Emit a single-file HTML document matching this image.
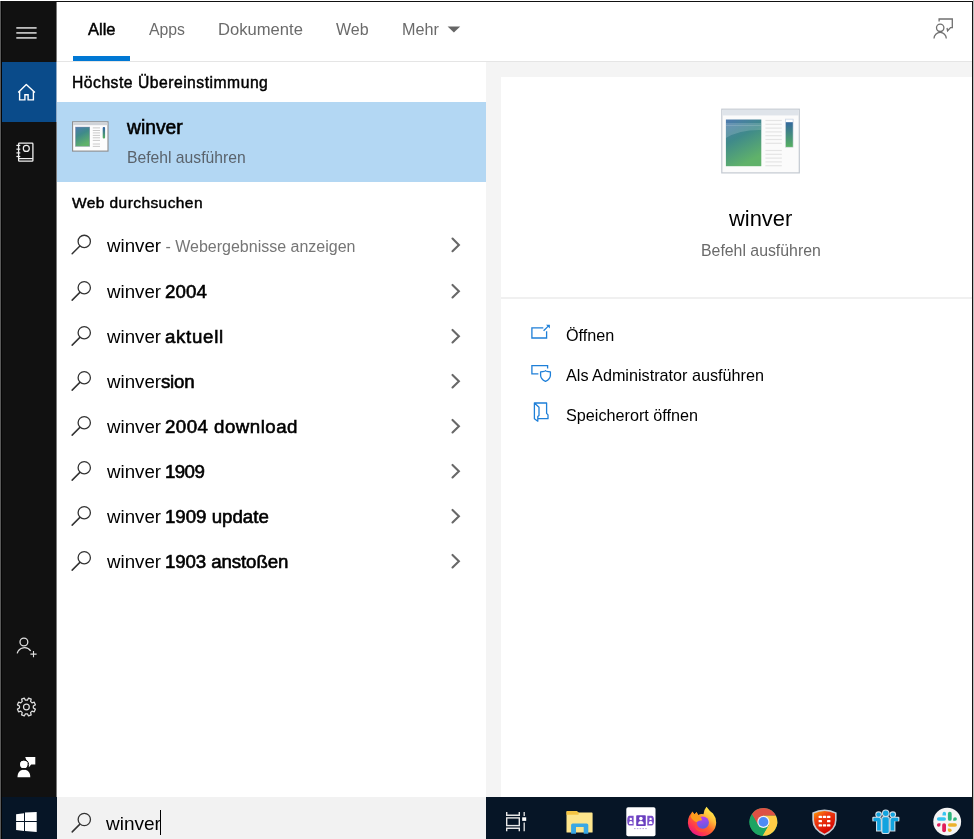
<!DOCTYPE html>
<html><head><meta charset="utf-8"><title>Suche</title><style>
*{margin:0;padding:0;box-sizing:border-box}
html,body{width:974px;height:839px;overflow:hidden;background:#fff}
body{position:relative;font-family:"Liberation Sans",sans-serif}
.a{position:absolute;display:block}
.t{position:absolute;white-space:pre;line-height:normal;will-change:transform}
</style></head>
<body>
<div class="a" style="left:0px;top:1px;width:1px;height:838px;background:#5a5a5a"></div>
<div class="a" style="left:973px;top:0px;width:1px;height:839px;background:#bdbdbd"></div>
<div class="a" style="left:1px;top:1px;width:972px;height:1px;background:#111"></div>
<div class="a" style="left:1px;top:1px;width:1px;height:838px;background:#050505"></div>
<div class="a" style="left:972px;top:1px;width:1px;height:838px;background:#151515"></div>
<div class="a" style="left:2px;top:2px;width:54px;height:795px;background:#111"></div>
<div class="a" style="left:56px;top:2px;width:1px;height:795px;background:#7a7a7a"></div>
<div class="a" style="left:2px;top:62px;width:54px;height:60px;background:#0a4b8a"></div>
<div class="a" style="left:56px;top:62px;width:1px;height:60px;background:#8fa9c4"></div>
<div class="a" style="left:2px;top:797px;width:55px;height:42px;background:#061526"></div>
<div class="a" style="left:486px;top:797px;width:486px;height:42px;background:#061526"></div>
<div class="a" style="left:57px;top:797px;width:429px;height:42px;background:#f2f2f2"></div>
<div class="a" style="left:486px;top:62px;width:486px;height:735px;background:#f4f4f4"></div>
<div class="a" style="left:501px;top:77px;width:471px;height:720px;background:#fff"></div>
<div class="a" style="left:501px;top:297px;width:471px;height:2px;background:#f0f0f0"></div>
<div class="a" style="left:57px;top:61px;width:915px;height:1px;background:#e5e5e5"></div>
<div class="a" style="left:73px;top:56px;width:57px;height:5px;background:#0078d4"></div>
<div class="a" style="left:57px;top:102px;width:429px;height:80px;background:#b3d7f3"></div>
<svg class="a" style="left:0;top:0" width="974" height="839" viewBox="0 0 974 839"><line x1="16.3" y1="27.9" x2="36.6" y2="27.9" stroke="#c8c8c8" stroke-width="1.7"/><line x1="16.3" y1="32.9" x2="36.6" y2="32.9" stroke="#c8c8c8" stroke-width="1.7"/><line x1="16.3" y1="37.9" x2="36.6" y2="37.9" stroke="#c8c8c8" stroke-width="1.7"/><path d="M18.2,92.6 L26.3,84.6 L34.9,92.6" fill="none" stroke="#fff" stroke-width="1.4" stroke-linejoin="round"/><path d="M19.6,91.3 V99.9 H24.9 V94.7 H28.1 V99.9 H33.4 V91.3" fill="none" stroke="#fff" stroke-width="1.4"/><rect x="18.6" y="143.1" width="14.3" height="18.1" rx="0.8" fill="none" stroke="#f0f0f0" stroke-width="1.3"/><line x1="18.6" y1="158.6" x2="32.9" y2="158.6" stroke="#f0f0f0" stroke-width="1.2"/><circle cx="26.3" cy="148.4" r="3.0" fill="none" stroke="#f0f0f0" stroke-width="1.2"/><line x1="16.4" y1="145.4" x2="20.3" y2="145.4" stroke="#f0f0f0" stroke-width="1.2"/><line x1="16.4" y1="149.2" x2="20.3" y2="149.2" stroke="#f0f0f0" stroke-width="1.2"/><line x1="16.4" y1="152.9" x2="20.3" y2="152.9" stroke="#f0f0f0" stroke-width="1.2"/><line x1="16.4" y1="156.5" x2="20.3" y2="156.5" stroke="#f0f0f0" stroke-width="1.2"/><circle cx="23.9" cy="642" r="3.9" fill="none" stroke="#e0e0e0" stroke-width="1.3"/><path d="M17.2,653.3 A7.5,7.5 0 0 1 30.7,651" fill="none" stroke="#e0e0e0" stroke-width="1.3"/><path d="M30.4,654.1 H36.6 M33.5,651 V657.2" fill="none" stroke="#e0e0e0" stroke-width="1.1"/><path d="M27.43,700.08 L28.55,698.05 L31.21,699.16 L30.56,701.37 L32.03,702.84 L34.24,702.19 L35.35,704.85 L33.32,705.97 L33.32,708.03 L35.35,709.15 L34.24,711.81 L32.03,711.16 L30.56,712.63 L31.21,714.84 L28.55,715.95 L27.43,713.92 L25.37,713.92 L24.25,715.95 L21.59,714.84 L22.24,712.63 L20.77,711.16 L18.56,711.81 L17.45,709.15 L19.48,708.03 L19.48,705.97 L17.45,704.85 L18.56,702.19 L20.77,702.84 L22.24,701.37 L21.59,699.16 L24.25,698.05 L25.37,700.08Z" fill="none" stroke="#e0e0e0" stroke-width="1.25" stroke-linejoin="round"/><circle cx="26.4" cy="707.0" r="2.9" fill="none" stroke="#e0e0e0" stroke-width="1.2"/><circle cx="23.8" cy="764.4" r="3.6" fill="#fff"/><path d="M17.5,777.3 C17.5,772.2 20,769.7 23.9,769.7 C27.8,769.7 30.3,772.2 30.3,777.3 Z" fill="#fff"/><path d="M25.2,757.1 H35.3 V764.6 H31.2 L28.9,767.2 L28.1,764.6 Z" fill="#fff"/><circle cx="23.8" cy="764.4" r="4.8" fill="none" stroke="#111" stroke-width="1"/><circle cx="23.8" cy="764.4" r="3.6" fill="#fff"/><path d="M16.1,814.3 L24,813.2 V821.1 H16.1 Z M25,812.6 L36.7,811.9 V821.1 H25 Z M16.1,822.1 H24 V830.9 L16.1,829.9 Z M25,822.1 H36.7 V831.9 L25,831 Z" fill="#fff"/><circle cx="940.2" cy="27.8" r="3.7" fill="none" stroke="#707070" stroke-width="1.3"/><path d="M934.0,38.5 A6.15,6.15 0 0 1 946.3,38.5" fill="none" stroke="#707070" stroke-width="1.3"/><path d="M939.1,21.6 V19.0 H952.3 V27.6 H950.6 L947.6,30.8 L947.0,28.0" fill="none" stroke="#707070" stroke-width="1.3" stroke-linejoin="miter"/><polygon points="447.6,26.5 460.2,26.5 453.9,32.4" fill="#666"/><defs><linearGradient id="gimg" x1="0" y1="0" x2="0.4" y2="1"><stop offset="0" stop-color="#4f7bb0"/><stop offset="0.45" stop-color="#3f8a8a"/><stop offset="1" stop-color="#60b26a"/></linearGradient><linearGradient id="gbar" x1="0" y1="0" x2="0" y2="1"><stop offset="0" stop-color="#2f5fa5"/><stop offset="1" stop-color="#56b060"/></linearGradient></defs><rect x="72.6" y="121.8" width="35.4" height="29.3" fill="#fdfdfd" stroke="#8c8c8c" stroke-width="1.1"/><rect x="73.2" y="122.4" width="34.2" height="2.8" fill="#cfd3d8"/><rect x="75.4" y="127" width="14.4" height="19.4" fill="url(#gimg)" stroke="#9090b0" stroke-width="0.4"/><line x1="92.8" y1="127.9" x2="100" y2="127.9" stroke="#c4c4c4" stroke-width="0.9"/><line x1="92.8" y1="130.5" x2="100" y2="130.5" stroke="#c4c4c4" stroke-width="0.9"/><line x1="92.8" y1="132.9" x2="100" y2="132.9" stroke="#c4c4c4" stroke-width="0.9"/><line x1="92.8" y1="135.4" x2="100" y2="135.4" stroke="#c4c4c4" stroke-width="0.9"/><line x1="92.8" y1="137.8" x2="100" y2="137.8" stroke="#c4c4c4" stroke-width="0.9"/><line x1="92.8" y1="140.4" x2="100" y2="140.4" stroke="#c4c4c4" stroke-width="0.9"/><line x1="92.8" y1="144.0" x2="100" y2="144.0" stroke="#c4c4c4" stroke-width="0.9"/><line x1="92.8" y1="146.4" x2="100" y2="146.4" stroke="#c4c4c4" stroke-width="0.9"/><rect x="102.7" y="127" width="2.4" height="11.4" rx="1" fill="url(#gbar)"/><rect x="721.8" y="109.2" width="77.5" height="63.7" fill="#fbfbfb" stroke="#c3c9d1" stroke-width="1.2"/><rect x="722.4" y="109.8" width="76.3" height="5.6" fill="#dfe4ea"/><rect x="725.9" y="119.5" width="35.4" height="46.7" fill="url(#gimg)"/><clipPath id="bigclip"><rect x="725.9" y="119.5" width="35.4" height="46.7"/></clipPath><g clip-path="url(#bigclip)"><path d="M725.9,123 H761.3 V130 Q740,129.5 725.9,138 Z" fill="#ffffff" opacity="0.16"/><line x1="725.9" y1="125.5" x2="761.3" y2="125.5" stroke="#fff" stroke-width="0.6" opacity="0.25"/></g><line x1="765.4" y1="120.5" x2="781.8" y2="120.5" stroke="#e4e4e4" stroke-width="1.2"/><line x1="765.4" y1="124.3" x2="781.8" y2="124.3" stroke="#e4e4e4" stroke-width="1.2"/><line x1="765.4" y1="128.1" x2="781.8" y2="128.1" stroke="#e4e4e4" stroke-width="1.2"/><line x1="765.4" y1="131.9" x2="781.8" y2="131.9" stroke="#e4e4e4" stroke-width="1.2"/><line x1="765.4" y1="135.7" x2="781.8" y2="135.7" stroke="#e4e4e4" stroke-width="1.2"/><line x1="765.4" y1="139.5" x2="781.8" y2="139.5" stroke="#e4e4e4" stroke-width="1.2"/><line x1="765.4" y1="143.3" x2="781.8" y2="143.3" stroke="#e4e4e4" stroke-width="1.2"/><line x1="765.4" y1="150.5" x2="781.8" y2="150.5" stroke="#e4e4e4" stroke-width="1.2"/><line x1="765.4" y1="154.3" x2="781.8" y2="154.3" stroke="#e4e4e4" stroke-width="1.2"/><line x1="765.4" y1="158.1" x2="781.8" y2="158.1" stroke="#e4e4e4" stroke-width="1.2"/><line x1="765.4" y1="161.9" x2="781.8" y2="161.9" stroke="#e4e4e4" stroke-width="1.2"/><line x1="765.4" y1="165.7" x2="781.8" y2="165.7" stroke="#e4e4e4" stroke-width="1.2"/><rect x="785.4" y="119" width="7.7" height="28.2" fill="url(#gbar)" stroke="#d8dce4" stroke-width="0.6"/><rect x="785.6" y="119.2" width="7.3" height="3" fill="#fff"/><circle cx="84.25" cy="241.4" r="6.15" fill="none" stroke="#333" stroke-width="1.3"/><line x1="72.15" y1="253.80" x2="79.65" y2="246.30" stroke="#333" stroke-width="1.5" stroke-linecap="round"/><polyline points="452.5,238.60 458.9,244.90 452.5,251.20" fill="none" stroke="#686868" stroke-width="2.1" stroke-linecap="round"/><circle cx="84.25" cy="287.7" r="6.15" fill="none" stroke="#333" stroke-width="1.3"/><line x1="72.15" y1="300.10" x2="79.65" y2="292.60" stroke="#333" stroke-width="1.5" stroke-linecap="round"/><polyline points="452.5,284.90 458.9,291.20 452.5,297.50" fill="none" stroke="#686868" stroke-width="2.1" stroke-linecap="round"/><circle cx="84.25" cy="332.7" r="6.15" fill="none" stroke="#333" stroke-width="1.3"/><line x1="72.15" y1="345.10" x2="79.65" y2="337.60" stroke="#333" stroke-width="1.5" stroke-linecap="round"/><polyline points="452.5,329.90 458.9,336.20 452.5,342.50" fill="none" stroke="#686868" stroke-width="2.1" stroke-linecap="round"/><circle cx="84.25" cy="377.7" r="6.15" fill="none" stroke="#333" stroke-width="1.3"/><line x1="72.15" y1="390.10" x2="79.65" y2="382.60" stroke="#333" stroke-width="1.5" stroke-linecap="round"/><polyline points="452.5,374.90 458.9,381.20 452.5,387.50" fill="none" stroke="#686868" stroke-width="2.1" stroke-linecap="round"/><circle cx="84.25" cy="422.7" r="6.15" fill="none" stroke="#333" stroke-width="1.3"/><line x1="72.15" y1="435.10" x2="79.65" y2="427.60" stroke="#333" stroke-width="1.5" stroke-linecap="round"/><polyline points="452.5,419.90 458.9,426.20 452.5,432.50" fill="none" stroke="#686868" stroke-width="2.1" stroke-linecap="round"/><circle cx="84.25" cy="467.7" r="6.15" fill="none" stroke="#333" stroke-width="1.3"/><line x1="72.15" y1="480.10" x2="79.65" y2="472.60" stroke="#333" stroke-width="1.5" stroke-linecap="round"/><polyline points="452.5,464.90 458.9,471.20 452.5,477.50" fill="none" stroke="#686868" stroke-width="2.1" stroke-linecap="round"/><circle cx="84.25" cy="512.6999999999999" r="6.15" fill="none" stroke="#333" stroke-width="1.3"/><line x1="72.15" y1="525.10" x2="79.65" y2="517.60" stroke="#333" stroke-width="1.5" stroke-linecap="round"/><polyline points="452.5,509.90 458.9,516.20 452.5,522.50" fill="none" stroke="#686868" stroke-width="2.1" stroke-linecap="round"/><circle cx="84.25" cy="557.6999999999999" r="6.15" fill="none" stroke="#333" stroke-width="1.3"/><line x1="72.15" y1="570.10" x2="79.65" y2="562.60" stroke="#333" stroke-width="1.5" stroke-linecap="round"/><polyline points="452.5,554.90 458.9,561.20 452.5,567.50" fill="none" stroke="#686868" stroke-width="2.1" stroke-linecap="round"/><path d="M543.3,327.9 H531.9 V338 H546.6 V331.2" fill="none" stroke="#1e7fd8" stroke-width="1.3"/><line x1="543.6" y1="330.8" x2="548.3" y2="326.1" stroke="#1e7fd8" stroke-width="1.3"/><polygon points="546,324.8 549.9,324.8 549.9,328.6" fill="#1e7fd8"/><path d="M538.4,373.9 H531.9 V365.6 H547.6 V368.4" fill="none" stroke="#1e7fd8" stroke-width="1.3"/><path d="M540.6,371.8 Q545.5,371.6 545.5,370.6 Q545.5,371.6 550.4,371.8 V375.3 Q550.4,379.2 545.5,381.4 Q540.6,379.2 540.6,375.3 Z" fill="#fff" stroke="#1e7fd8" stroke-width="1.3" stroke-linejoin="round"/><path d="M534.4,403 H546.6 V413.4 L548,414.9 V418.7 H538 M534.4,403 L539,407.3 V415.5 L537.8,416.6 V421.2 L534.4,418.7 Z" fill="none" stroke="#1e7fd8" stroke-width="1.3" stroke-linejoin="round"/><circle cx="84.3" cy="819.5" r="6.15" fill="none" stroke="#333" stroke-width="1.3"/><line x1="72.20" y1="831.90" x2="79.70" y2="824.40" stroke="#333" stroke-width="1.5" stroke-linecap="round"/><path d="M506.7,811.9 V815.2 H519.3 V811.9" fill="none" stroke="#e6e6e6" stroke-width="1.4"/><rect x="506.7" y="817.9" width="12.6" height="7.7" fill="none" stroke="#e6e6e6" stroke-width="1.4"/><path d="M506.7,831.2 V828.2 H519.3 V831.2" fill="none" stroke="#e6e6e6" stroke-width="1.4"/><path d="M524.2,811.9 V815.9 M524.2,822.4 V831.2" fill="none" stroke="#e6e6e6" stroke-width="1.3"/><rect x="522.2" y="817.3" width="4" height="3.6" fill="#fff"/><path d="M566.5,812 Q566.5,811.1 567.4,811.1 H576.5 L578.6,812.6 H591.8 Q592.6,812.6 592.6,813.4 V832 Q592.6,832.6 592,832.6 H567.1 Q566.5,832.6 566.5,832 Z" fill="#fde58c"/><path d="M566.5,812 Q566.5,811.1 567.4,811.1 H576.5 L578.6,812.6 V814.7 H566.5 Z" fill="#f4c443"/><path d="M571.1,833.8 V825 Q571.1,823.4 572.7,823.4 H586.7 Q588.3,823.4 588.3,825 V833.8 H583.7 V827.1 H576 V833.8 Z" fill="#3aa8e4"/><rect x="626.3" y="807.3" width="29.2" height="29" rx="1.8" fill="#fff"/><rect x="636.2" y="815.2" width="9.6" height="10.8" rx="0.8" fill="#6a3fbf"/><path d="M633.6,815.8 H629.5 Q627.2,815.8 627.2,820.5 Q627.2,825.6 629.5,825.6 H633.6 Z" fill="#7b4fcb"/><path d="M647.3,815.8 H651.6 Q654,815.8 654,820.5 Q654,825.6 651.6,825.6 H647.3 Z" fill="#7b4fcb"/><circle cx="640.9" cy="818.6" r="1.8" fill="#fff"/><path d="M638.2,824.2 Q638.2,820.9 640.9,820.9 Q643.6,820.9 643.6,824.2 Z" fill="#fff"/><circle cx="630.8" cy="818.9" r="1.2" fill="#fff"/><path d="M629,824 Q629,821 630.8,821 Q632.6,821 632.6,824 Z" fill="#fff"/><circle cx="650.6" cy="818.9" r="1.2" fill="#fff"/><path d="M648.8,824 Q648.8,821 650.6,821 Q652.4,821 652.4,824 Z" fill="#fff"/><line x1="634" y1="828.6" x2="648" y2="828.6" stroke="#b8a0e0" stroke-width="1" stroke-dasharray="1.6 1.2"/><defs><linearGradient id="ffo" x1="0.85" y1="0.05" x2="0.2" y2="0.95"><stop offset="0" stop-color="#fff44f"/><stop offset="0.3" stop-color="#ffbd3a"/><stop offset="0.55" stop-color="#ff6a2c"/><stop offset="0.8" stop-color="#ff3550"/><stop offset="1" stop-color="#e5168a"/></linearGradient><linearGradient id="ffp" x1="0.3" y1="0" x2="0.6" y2="1"><stop offset="0" stop-color="#c03cf0"/><stop offset="1" stop-color="#5a5ee0"/></linearGradient></defs><path d="M702,836.2 A14,14 0 0 1 689.3,816 L692.4,811.6 L694.5,814.2 L696.6,812 L698.2,815 Q700.5,813.6 703.5,814.2 Q704,809.5 706.5,806.8 Q709.5,811.2 713,813.5 Q716.2,817.5 716.2,822.4 A14.1,13.8 0 0 1 702,836.2 Z" fill="url(#ffo)"/><circle cx="702.8" cy="822.6" r="6.1" fill="url(#ffp)"/><path d="M690.6,816.5 L692.4,811.9 L694.5,814.5 L696.6,812.3 L698.2,815.5 Q701.8,817 702,820.2 Q698.5,820.2 696.5,822.2 Q692.5,820.8 690.6,816.5 Z" fill="#ff9d1c"/><path d="M694.6,823.5 Q695.8,830.5 703,830.4 Q708.6,830 709.4,824 Q709.3,830.8 702.5,832 Q694.8,831.8 694.6,823.5 Z" fill="#ff5a30" opacity="0.8"/><circle cx="763.4" cy="821.9" r="13.9" fill="#1da462"/><path d="M751.87,814.13 A13.9,13.9 0 0 1 775.89,815.80 L763.40,815.80 L763.4,821.9 L758.12,824.95 Z" fill="#dd5144"/><path d="M775.89,815.80 A13.9,13.9 0 0 1 762.44,835.77 L768.68,824.95 L763.4,821.9 L763.40,815.80 Z" fill="#ffcd46"/><path d="M762.44,835.77 A13.9,13.9 0 0 1 751.87,814.13 L758.12,824.95 L763.4,821.9 L768.68,824.95 Z" fill="#1da462"/><circle cx="763.4" cy="821.9" r="6.1" fill="#f4f4f4"/><circle cx="763.4" cy="821.9" r="4.9" fill="#4c8bf5"/><defs><linearGradient id="frt" x1="0" y1="0" x2="0.6" y2="1"><stop offset="0" stop-color="#ffa200"/><stop offset="0.35" stop-color="#f04010"/><stop offset="1" stop-color="#d40000"/></linearGradient></defs><path d="M812.3,812.5 Q824.5,806.5 836.6,812.5 V820 Q836.6,830 824.5,835.6 Q812.3,830 812.3,820 Z" fill="#c8ccd2"/><path d="M814,813.6 Q824.5,808.6 835,813.6 V820 Q835,828.8 824.5,833.8 Q814,828.8 814,820 Z" fill="url(#frt)"/><rect x="818.6" y="815.8" width="3.4" height="2.3" rx="0.6" fill="#fff"/><rect x="822.8" y="815.8" width="3.4" height="2.3" rx="0.6" fill="#fff"/><rect x="827" y="815.8" width="3.4" height="2.3" rx="0.6" fill="#fff"/><rect x="818.6" y="820" width="3.4" height="2.3" rx="0.6" fill="#fff"/><rect x="827" y="820" width="3.4" height="2.3" rx="0.6" fill="#fff"/><rect x="818.6" y="824.2" width="3.4" height="2.3" rx="0.6" fill="#fff"/><rect x="822.8" y="824.2" width="3.4" height="2.3" rx="0.6" fill="#fff"/><rect x="827" y="824.2" width="3.4" height="2.3" rx="0.6" fill="#fff"/><circle cx="885.7" cy="813.3" r="3.8000000000000003" fill="#d0dde6"/><circle cx="878.6" cy="814.6" r="3.3000000000000003" fill="#d0dde6"/><circle cx="892.8" cy="814.6" r="3.3000000000000003" fill="#d0dde6"/><rect x="881.3" y="816.1" width="8.5" height="18.0" rx="2.7" fill="#d0dde6"/><path d="M872.3,817.5 Q872.3,816.6999999999999 873.5,816.6999999999999 H878.5 Q881.9,816.6999999999999 881.9,820.5 V831.6 H876.0 V821.3 H873.5 Q872.3,822.3000000000001 872.3,820 Z" fill="#d0dde6"/><path d="M899.4,817.5 Q899.4,816.6999999999999 898.2,816.6999999999999 H893 Q889.5,816.6999999999999 889.5,820.5 V831.6 H895.4 V821.3 H898.2 Q899.4,822.3000000000001 899.4,820 Z" fill="#d0dde6"/><circle cx="885.7" cy="813.3" r="2.7" fill="#12a3df"/><circle cx="878.6" cy="814.6" r="2.2" fill="#12a3df"/><circle cx="892.8" cy="814.6" r="2.2" fill="#12a3df"/><rect x="882.4" y="817.2" width="6.3" height="15.8" rx="1.6" fill="#12a3df"/><path d="M873.4,818.6 Q873.4,817.8 874.6,817.8 H878.5 Q880.8,817.8 880.8,820.5 V830.5 H877.1 V821.3 H874.6 Q873.4,821.2 873.4,820 Z" fill="#12a3df"/><path d="M898.3,818.6 Q898.3,817.8 897.1,817.8 H893 Q890.6,817.8 890.6,820.5 V830.5 H894.3 V821.3 H897.1 Q898.3,821.2 898.3,820 Z" fill="#12a3df"/><circle cx="947.2" cy="821.7" r="13.9" fill="#f4f4f4"/><rect x="936.9" y="817.2" width="9.1" height="3.6" rx="1.8" fill="#36c5f0"/><path d="M942.4,815.6 Q942.4,811.8 944.2,811.8 Q946,811.8 946,813.6 V815.6 Z" fill="#36c5f0"/><rect x="947.9" y="811.8" width="3.8" height="9" rx="1.9" fill="#2eb67d"/><path d="M953.2,820.8 H955.1 Q956.9,820.8 956.9,819 Q956.9,817.2 955.1,817.2 Q953.2,817.2 953.2,819 Z" fill="#2eb67d"/><rect x="942.2" y="823.2" width="3.8" height="9" rx="1.9" fill="#e01e5a"/><path d="M940.5,823.2 H938.6 Q936.9,823.2 936.9,825 Q936.9,826.8 938.6,826.8 Q940.5,826.8 940.5,825 Z" fill="#e01e5a"/><rect x="947.9" y="823.2" width="9" height="3.6" rx="1.8" fill="#ecb22e"/><path d="M947.9,828.4 V830.2 Q947.9,832 949.7,832 Q951.6,832 951.6,830.2 Q951.6,828.4 949.7,828.4 Z" fill="#ecb22e"/></svg>
<div class="t" style="left:87.80px;top:19.67px;font-size:16.5px;color:#000;font-weight:400;-webkit-text-stroke:0.45px #000;">Alle</div>
<div class="t" style="left:148.50px;top:20.90px;font-size:15.8px;color:#6b6b6b;font-weight:400;">Apps</div>
<div class="t" style="left:217.50px;top:20.18px;font-size:16.6px;color:#6b6b6b;font-weight:400;">Dokumente</div>
<div class="t" style="left:335.50px;top:20.72px;font-size:16px;color:#6b6b6b;font-weight:400;">Web</div>
<div class="t" style="left:401.50px;top:19.94px;font-size:16.2px;color:#6b6b6b;font-weight:400;">Mehr</div>
<div class="t" style="left:72.00px;top:74.29px;font-size:15.7px;color:#000;font-weight:400;-webkit-text-stroke:0.45px #000;letter-spacing:0.5px;">Höchste Übereinstimmung</div>
<div class="t" style="left:126.50px;top:117.13px;font-size:19.3px;color:#000;font-weight:400;-webkit-text-stroke:0.45px #000;-webkit-text-stroke:0.6px #000;">winver</div>
<div class="t" style="left:127.20px;top:149.29px;font-size:15.7px;color:#5a636c;font-weight:400;">Befehl ausführen</div>
<div class="t" style="left:71.80px;top:194.27px;font-size:15.5px;color:#000;font-weight:400;-webkit-text-stroke:0.45px #000;letter-spacing:0.42px;">Web durchsuchen</div>
<div class="t" style="left:106.50px;top:235.08px;font-size:18.7px;color:#000;font-weight:400;">winver<span style="font-size:16px;color:#767676"> - Webergebnisse anzeigen</span></div>
<div class="t" style="left:106.50px;top:281.38px;font-size:18.7px;color:#000;font-weight:400;">winver <span style="-webkit-text-stroke:0.6px #000;margin-left:-1.3px;letter-spacing:0.1px">2004</span></div>
<div class="t" style="left:106.50px;top:326.38px;font-size:18.7px;color:#000;font-weight:400;">winver <span style="-webkit-text-stroke:0.6px #000;margin-left:-1.3px;letter-spacing:0.72px">aktuell</span></div>
<div class="t" style="left:106.50px;top:371.38px;font-size:18.7px;color:#000;font-weight:400;">winver<span style="-webkit-text-stroke:0.6px #000;margin-left:0px;letter-spacing:-0.25px">sion</span></div>
<div class="t" style="left:106.50px;top:416.38px;font-size:18.7px;color:#000;font-weight:400;">winver <span style="-webkit-text-stroke:0.6px #000;margin-left:-1.3px;letter-spacing:0.48px">2004 download</span></div>
<div class="t" style="left:106.50px;top:461.38px;font-size:18.7px;color:#000;font-weight:400;">winver <span style="-webkit-text-stroke:0.6px #000;margin-left:-1.3px;letter-spacing:-0.55px">1909</span></div>
<div class="t" style="left:106.50px;top:506.38px;font-size:18.7px;color:#000;font-weight:400;">winver <span style="-webkit-text-stroke:0.6px #000;margin-left:-1.3px;letter-spacing:0.0px">1909 update</span></div>
<div class="t" style="left:106.50px;top:551.38px;font-size:18.7px;color:#000;font-weight:400;">winver <span style="-webkit-text-stroke:0.6px #000;margin-left:-1.3px;letter-spacing:-0.1px">1903 anstoßen</span></div>
<div class="t" style="left:729.20px;top:206.48px;font-size:21.9px;color:#000;font-weight:400;">winver</div>
<div class="t" style="left:701.30px;top:241.66px;font-size:15.85px;color:#6a6a6a;font-weight:400;">Befehl ausführen</div>
<div class="t" style="left:566.00px;top:326.34px;font-size:16.2px;color:#000;font-weight:400;">Öffnen</div>
<div class="t" style="left:566.00px;top:366.34px;font-size:16.2px;color:#000;font-weight:400;">Als Administrator ausführen</div>
<div class="t" style="left:566.00px;top:405.84px;font-size:16.2px;color:#000;font-weight:400;">Speicherort öffnen</div>
<div class="t" style="left:106.00px;top:812.80px;font-size:19px;color:#000;font-weight:400;">winver</div>
<div class="a" style="left:160px;top:810px;width:1px;height:25px;background:#000"></div>
</body></html>
